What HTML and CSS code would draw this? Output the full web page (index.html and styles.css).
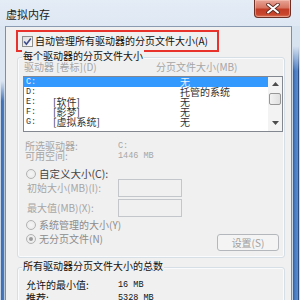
FILE: index.html
```html
<!DOCTYPE html>
<html lang="zh-CN">
<head>
<meta charset="utf-8">
<title>虚拟内存</title>
<link rel="stylesheet" href="styles.css">
</head>
<body>
<div class="win">
  <div class="titlebar">
    <span class="title">虚拟内存</span>
    <div class="close">
      <svg width="14" height="11" viewBox="0 0 14 11"><path d="M2 1.5 L12 9.5 M12 1.5 L2 9.5" stroke="#5a2a22" stroke-width="3.6" stroke-linecap="round"/><path d="M2 1.5 L12 9.5 M12 1.5 L2 9.5" stroke="#ffffff" stroke-width="2" stroke-linecap="round"/></svg>
    </div>
  </div>
  <div class="frame">
    <div class="edge edge-left"></div>
    <div class="client">
      <div class="autobox">
        <span class="check">
          <svg width="9" height="9" viewBox="0 0 9 9"><path d="M1.2 4.6 L3.4 7.2 L7.8 1.4" fill="none" stroke="#3b4d8c" stroke-width="1.6"/></svg>
        </span>
        <span class="autolabel">自动管理所有驱动器的分页文件大小(A)</span>
      </div>

      <div class="group group1">
        <div class="legend">每个驱动器的分页文件大小</div>
        <div class="hdr">
          <span class="hdr-a">驱动器 [卷标](D)</span>
          <span class="hdr-b">分页文件大小(MB)</span>
        </div>
        <div class="listbox">
          <div class="rows">
            <div class="row sel"><span class="dl">C:</span><span class="vl"></span><span class="sz">无</span></div>
            <div class="row"><span class="dl">D:</span><span class="vl"></span><span class="sz">托管的系统</span></div>
            <div class="row"><span class="dl">E:</span><span class="vl">[软件]</span><span class="sz">无</span></div>
            <div class="row"><span class="dl">F:</span><span class="vl">[影梦]</span><span class="sz">无</span></div>
            <div class="row"><span class="dl">G:</span><span class="vl">[虚拟系统]</span><span class="sz">无</span></div>
          </div>
          <div class="vscroll">
            <svg class="arr" width="7" height="4" viewBox="0 0 7 4"><path d="M0 4 L3.5 0 L7 4 Z" fill="#4d4d4d"/></svg>
            <div class="thumb"></div>
            <svg class="arr arr-down" width="7" height="4" viewBox="0 0 7 4"><path d="M0 0 L3.5 4 L7 0 Z" fill="#4d4d4d"/></svg>
          </div>
        </div>

        <div class="info first"><span class="k">所选驱动器:</span><span class="v mono">C:</span></div>
        <div class="info"><span class="k">可用空间:</span><span class="v mono">1446 MB</span></div>

        <div class="radiorow r-custom"><span class="radio"></span><span class="rl dark">自定义大小(C):</span></div>
        <div class="field f1"><span class="fk">初始大小(MB)(I):</span><span class="input"></span></div>
        <div class="field f2"><span class="fk">最大值(MB)(X):</span><span class="input"></span></div>
        <div class="radiorow r-sys"><span class="radio"></span><span class="rl">系统管理的大小(Y)</span></div>
        <div class="lastrow">
          <div class="radiorow r-none"><span class="radio on"></span><span class="rl">无分页文件(N)</span></div>
          <button class="btn" disabled>设置(S)</button>
        </div>
      </div>

      <div class="group group2">
        <div class="legend">所有驱动器分页文件大小的总数</div>
        <div class="tot first"><span class="tk">允许的最小值:</span><span class="tv mono">16 MB</span></div>
        <div class="tot"><span class="tk">推荐:</span><span class="tv mono">5328 MB</span></div>
      </div>
    </div>
    <div class="edge edge-right"></div>
  </div>
</div>
</body>
</html>
```

FILE: styles.css
```css
* { box-sizing: border-box; }
html, body { margin: 0; padding: 0; }
body {
  width: 300px;
  height: 300px;
  overflow: hidden;
  font-family: "Noto Sans CJK SC", "Noto Sans", sans-serif;
  font-size: 10px;
  color: #000;
  background: #c9d7e8;
}
.win {
  width: 300px;
  height: 300px;
  display: flex;
  flex-direction: column;
  background: linear-gradient(to bottom, #e4ecf6 0, #d6e2f0 60px, #cbd9ea 300px);
}
.titlebar {
  height: 26px;
  flex: none;
  display: flex;
  align-items: flex-start;
  position: relative;
}
.title {
  margin: 8px 0 0 6px;
  font-size: 11px;
  line-height: 12px;
  color: #1a1a1a;
}
.close {
  position: absolute;
  left: 254px;
  top: 0;
  width: 37px;
  height: 18px;
  border: 1px solid #6d3027;
  border-top: none;
  border-radius: 0 0 4px 4px;
  background: linear-gradient(to bottom, #e7a597 0, #d87563 45%, #c23c26 55%, #c9472d 85%, #d8765a 100%);
  box-shadow: inset 0 0 0 1px rgba(255,210,200,0.45);
  display: flex;
  align-items: center;
  justify-content: center;
}
.frame {
  flex: 1;
  display: flex;
  min-height: 0;
}
.edge { flex: none; }
.edge-left {
  width: 5px;
  background:
    linear-gradient(to bottom, rgba(220,230,242,1) 0, rgba(220,230,242,1) 55px, rgba(220,230,242,0) 75px),
    linear-gradient(to right, #c5d4e6 0, #c5d4e6 1px, #3f6cae 1px, #4a7bc0 4px, #b9c9dc 4px);
}
.edge-right {
  width: 8px;
  background:
    linear-gradient(to bottom, rgba(216,227,240,1) 0, rgba(216,227,240,1) 20px, rgba(216,227,240,0) 45px),
    linear-gradient(to right, #c8d6e8 0, #c8d6e8 1px, #2f5d9c 1px, #4a7cc2 3px, #5a8ad0 6px, #2c4d7d 6px, #2c4d7d 7px, #c8d6e8 7px);
}
.client {
  flex: 1;
  background: #f0f0f0;
  border-left: 1px solid #7e8ea3;
  border-right: 1px solid #7e8ea3;
  border-top: 1px solid #8a9ab0;
  display: flex;
  flex-direction: column;
  overflow: hidden;
}
/* auto-manage checkbox highlighted by red box */
.autobox {
  margin: 3px 0 0 10px;
  width: 203px;
  height: 22px;
  border: 2px solid #e8322c;
  display: flex;
  align-items: center;
  padding-left: 4px;
  gap: 2px;
  flex: none;
}
.check {
  width: 11px;
  height: 11px;
  border: 1px solid #8e8f8f;
  background: linear-gradient(135deg, #dcdcdc, #fbfbfb);
  display: flex;
  align-items: center;
  justify-content: center;
  flex: none;
}
.autolabel { line-height: 12px; white-space: nowrap; color: #111; }

/* group boxes */
.group {
  margin-left: 11px;
  width: 268px;
  border: 1px solid #d5dfe5;
  border-radius: 3px;
  box-shadow: inset 0 0 0 1px #fafbfc;
  display: flex;
  flex-direction: column;
  flex: none;
}
.group1 { margin-top: 5px; height: 201px; }
.group2 { margin-top: 9px; height: 60px; }
.legend {
  align-self: flex-start;
  margin: -8px 0 0 4px;
  padding: 0 1px;
  background: #f0f0f0;
  line-height: 12px;
  white-space: nowrap;
  color: #111;
}
.hdr {
  display: flex;
  height: 10px;
  line-height: 10px;
  padding-left: 6px;
  color: #a6a6a6;
  white-space: nowrap;
}
.hdr-a { width: 132px; }

/* listbox */
.listbox {
  margin: 4px 0 0 5px;
  width: 260px;
  height: 56px;
  border: 1px solid #828790;
  background: #fff;
  display: flex;
}
.rows { width: 244px; }
.row {
  height: 10px;
  line-height: 10px;
  display: flex;
  color: #333;
  white-space: nowrap;
}
.row.sel { background: #3399ff; color: #e8f2ff; }
.dl { width: 29px; padding-left: 2px; font-family: "Liberation Mono", monospace; font-size: 8.5px; }
.vl { width: 127px; }
.sz { }
.vscroll {
  width: 14px;
  display: flex;
  flex-direction: column;
  align-items: center;
  background: #f3f3f3;
}
.arr { margin-top: 5px; flex: none; }
.arr-down { margin-top: 16px; }
.thumb {
  margin-top: 7px;
  width: 12px;
  height: 12px;
  border: 1px solid #979797;
  border-radius: 2px;
  background: linear-gradient(to right, #f2f2f2, #e0e0e0);
  flex: none;
}

/* info lines */
.info {
  display: flex;
  height: 10px;
  line-height: 10px;
  padding-left: 7px;
  color: #a6a6a6;
  white-space: nowrap;
}
.info.first { margin-top: 9px; }
.k { width: 93px; }
.mono { font-family: "Liberation Mono", monospace; font-size: 8.5px; }

.radiorow {
  display: flex;
  align-items: center;
  gap: 3px;
  height: 12px;
  padding-left: 8px;
  white-space: nowrap;
  color: #8c8c8c;
}
.r-custom { margin-top: 7px; height: 11px; }
.r-sys { margin-top: 2px; }
.rl { line-height: 12px; }
.rl.dark { color: #444; font-size: 10.5px; }
.radio {
  width: 10px;
  height: 10px;
  border-radius: 50%;
  border: 1px solid #b3b3b3;
  background: radial-gradient(circle at 50% 50%, #f6f6f6 0, #e6e6e6 100%);
  flex: none;
  display: flex;
  align-items: center;
  justify-content: center;
}
.radio.on::after {
  content: "";
  width: 4px;
  height: 4px;
  border-radius: 50%;
  background: #9c9c9c;
}
.field {
  display: flex;
  align-items: center;
  height: 18px;
  padding-left: 9px;
  color: #a6a6a6;
  white-space: nowrap;
}
.f2 { margin-top: 2px; }
.fk { width: 91px; line-height: 10px; }
.input {
  width: 64px;
  height: 18px;
  border: 1px solid #c3c7cb;
  background: #f0f0f0;
}
.lastrow {
  margin-top: 2px;
  display: flex;
  align-items: flex-start;
  height: 19px;
}
.lastrow .radiorow { flex: 1; }
.btn {
  margin: 1px 5px 0 0;
  width: 62px;
  height: 17px;
  padding: 0;
  border: 1px solid #b4b8bc;
  border-radius: 3px;
  background: #f4f4f4;
  font-family: inherit;
  font-size: 10px;
  line-height: 12px;
  color: #a0a0a0;
}

.tot {
  display: flex;
  height: 10px;
  line-height: 10px;
  padding-left: 8px;
  white-space: nowrap;
  color: #111;
}
.tot.first { margin-top: 8px; }
.tot + .tot { margin-top: 3px; }
.tk { width: 92px; }
```
